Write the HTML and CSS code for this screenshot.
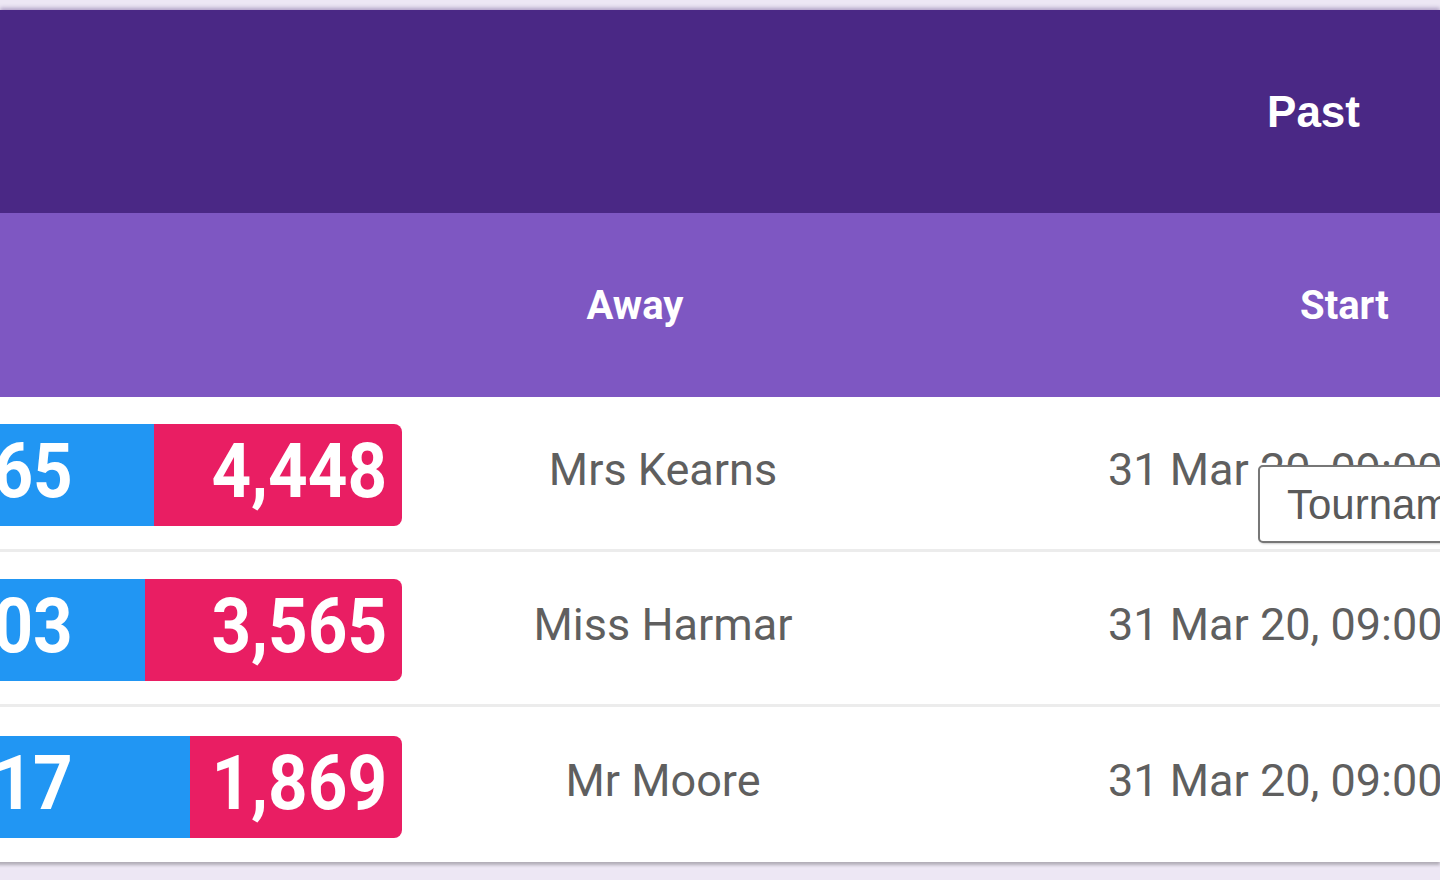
FILE: index.html
```html
<!DOCTYPE html>
<html lang="en">
<head>
<meta charset="utf-8">
<title>Past matches</title>
<link rel="stylesheet" href="styles.css">
</head>
<body>
  <div class="page">
    <header class="topbar">
      <span class="tab">Past</span>
    </header>
    <div class="table">
      <div class="thead">
        <div class="th th-score"></div>
        <div class="th th-away">Away</div>
        <div class="th th-start">Start</div>
      </div>
      <div class="row">
        <div class="cell score">
          <div class="bar home" style="width:289px"><span class="num">2,865</span></div>
          <div class="bar away" style="width:248px"><span class="num">4,448</span></div>
        </div>
        <div class="cell name">Mrs Kearns</div>
        <div class="cell date">31 Mar 20, 09:00
          <div class="tooltip">Tournament Name</div>
        </div>
      </div>
      <div class="row">
        <div class="cell score">
          <div class="bar home" style="width:280px"><span class="num">2,503</span></div>
          <div class="bar away" style="width:257px"><span class="num">3,565</span></div>
        </div>
        <div class="cell name">Miss Harmar</div>
        <div class="cell date">31 Mar 20, 09:00</div>
      </div>
      <div class="row">
        <div class="cell score">
          <div class="bar home" style="width:325px"><span class="num">2,417</span></div>
          <div class="bar away" style="width:212px"><span class="num">1,869</span></div>
        </div>
        <div class="cell name">Mr Moore</div>
        <div class="cell date">31 Mar 20, 09:00</div>
      </div>
    </div>
  </div>
</body>
</html>
```
FILE: styles.css
```css
html, body {
  margin: 0;
  padding: 0;
}
body {
  background: #ede7f4;
  overflow: hidden;
  width: 1440px;
  height: 880px;
  font-family: Roboto, "Liberation Sans", sans-serif;
}
.page {
  padding-top: 10px;
}
.topbar {
  height: 203px;
  background: #4a2885;
  display: flex;
  align-items: center;
  justify-content: flex-end;
  padding-right: 80px;
  box-shadow: 0 -2px 4px rgba(60, 30, 110, 0.35);
}
.tab {
  font-family: "Liberation Sans", Arial, sans-serif;
  font-weight: 700;
  font-size: 44px;
  color: #ffffff;
}
.table {
  margin-left: -135px;
  width: calc(100% + 135px);
  background: #ffffff;
  box-shadow: 0 3px 3px rgba(0, 0, 0, 0.25);
}
.thead {
  display: grid;
  grid-template-columns: 537px 522px 1fr;
  height: 184px;
  background: #7e57c2;
  align-items: center;
  color: #ffffff;
  font-weight: 700;
  font-size: 40px;
}
.th-away {
  text-align: center;
  padding-right: 56px;
}
.th-start {
  padding-left: 376px;
}
.row {
  display: grid;
  grid-template-columns: 537px 522px 1fr;
  height: 155px;
  padding-top: 4px;
  align-items: center;
  border-bottom: 3px solid #ececec;
  box-sizing: border-box;
}
.row:last-child {
  border-bottom: none;
  height: 155px;
}
.score {
  display: flex;
  height: 102px;
}
.bar {
  height: 102px;
  display: flex;
  align-items: flex-start;
  line-height: 94px;
  color: #ffffff;
  font-weight: 700;
  font-size: 76px;
  box-sizing: border-box;
  overflow: hidden;
  white-space: nowrap;
}
.bar.home {
  background: #2196f3;
  padding-left: 32px;
}
.bar.away {
  background: #e91e63;
  justify-content: flex-end;
  padding-right: 15px;
  border-radius: 0 8px 8px 0;
}
.num {
  display: inline-block;
  transform: scaleX(0.91);
}
.home .num {
  transform-origin: left center;
}
.away .num {
  transform-origin: right center;
}
.name,
.date {
  font-size: 45px;
  color: #5f5f5f;
  padding-bottom: 12px;
  white-space: nowrap;
}
.name {
  text-align: center;
}
.date {
  padding-left: 184px;
  position: relative;
}
.tooltip {
  position: absolute;
  left: 334px;
  top: 22px;
  width: 320px;
  height: 78px;
  box-sizing: border-box;
  background: #ffffff;
  border: 2px solid #777777;
  border-radius: 5px;
  padding: 16px 0 0 27px;
  font-family: "Liberation Sans", Arial, sans-serif;
  font-size: 42px;
  line-height: 43px;
  color: #5a5a5a;
  box-shadow: 1px 1px 2px rgba(0, 0, 0, 0.2);
}
```
